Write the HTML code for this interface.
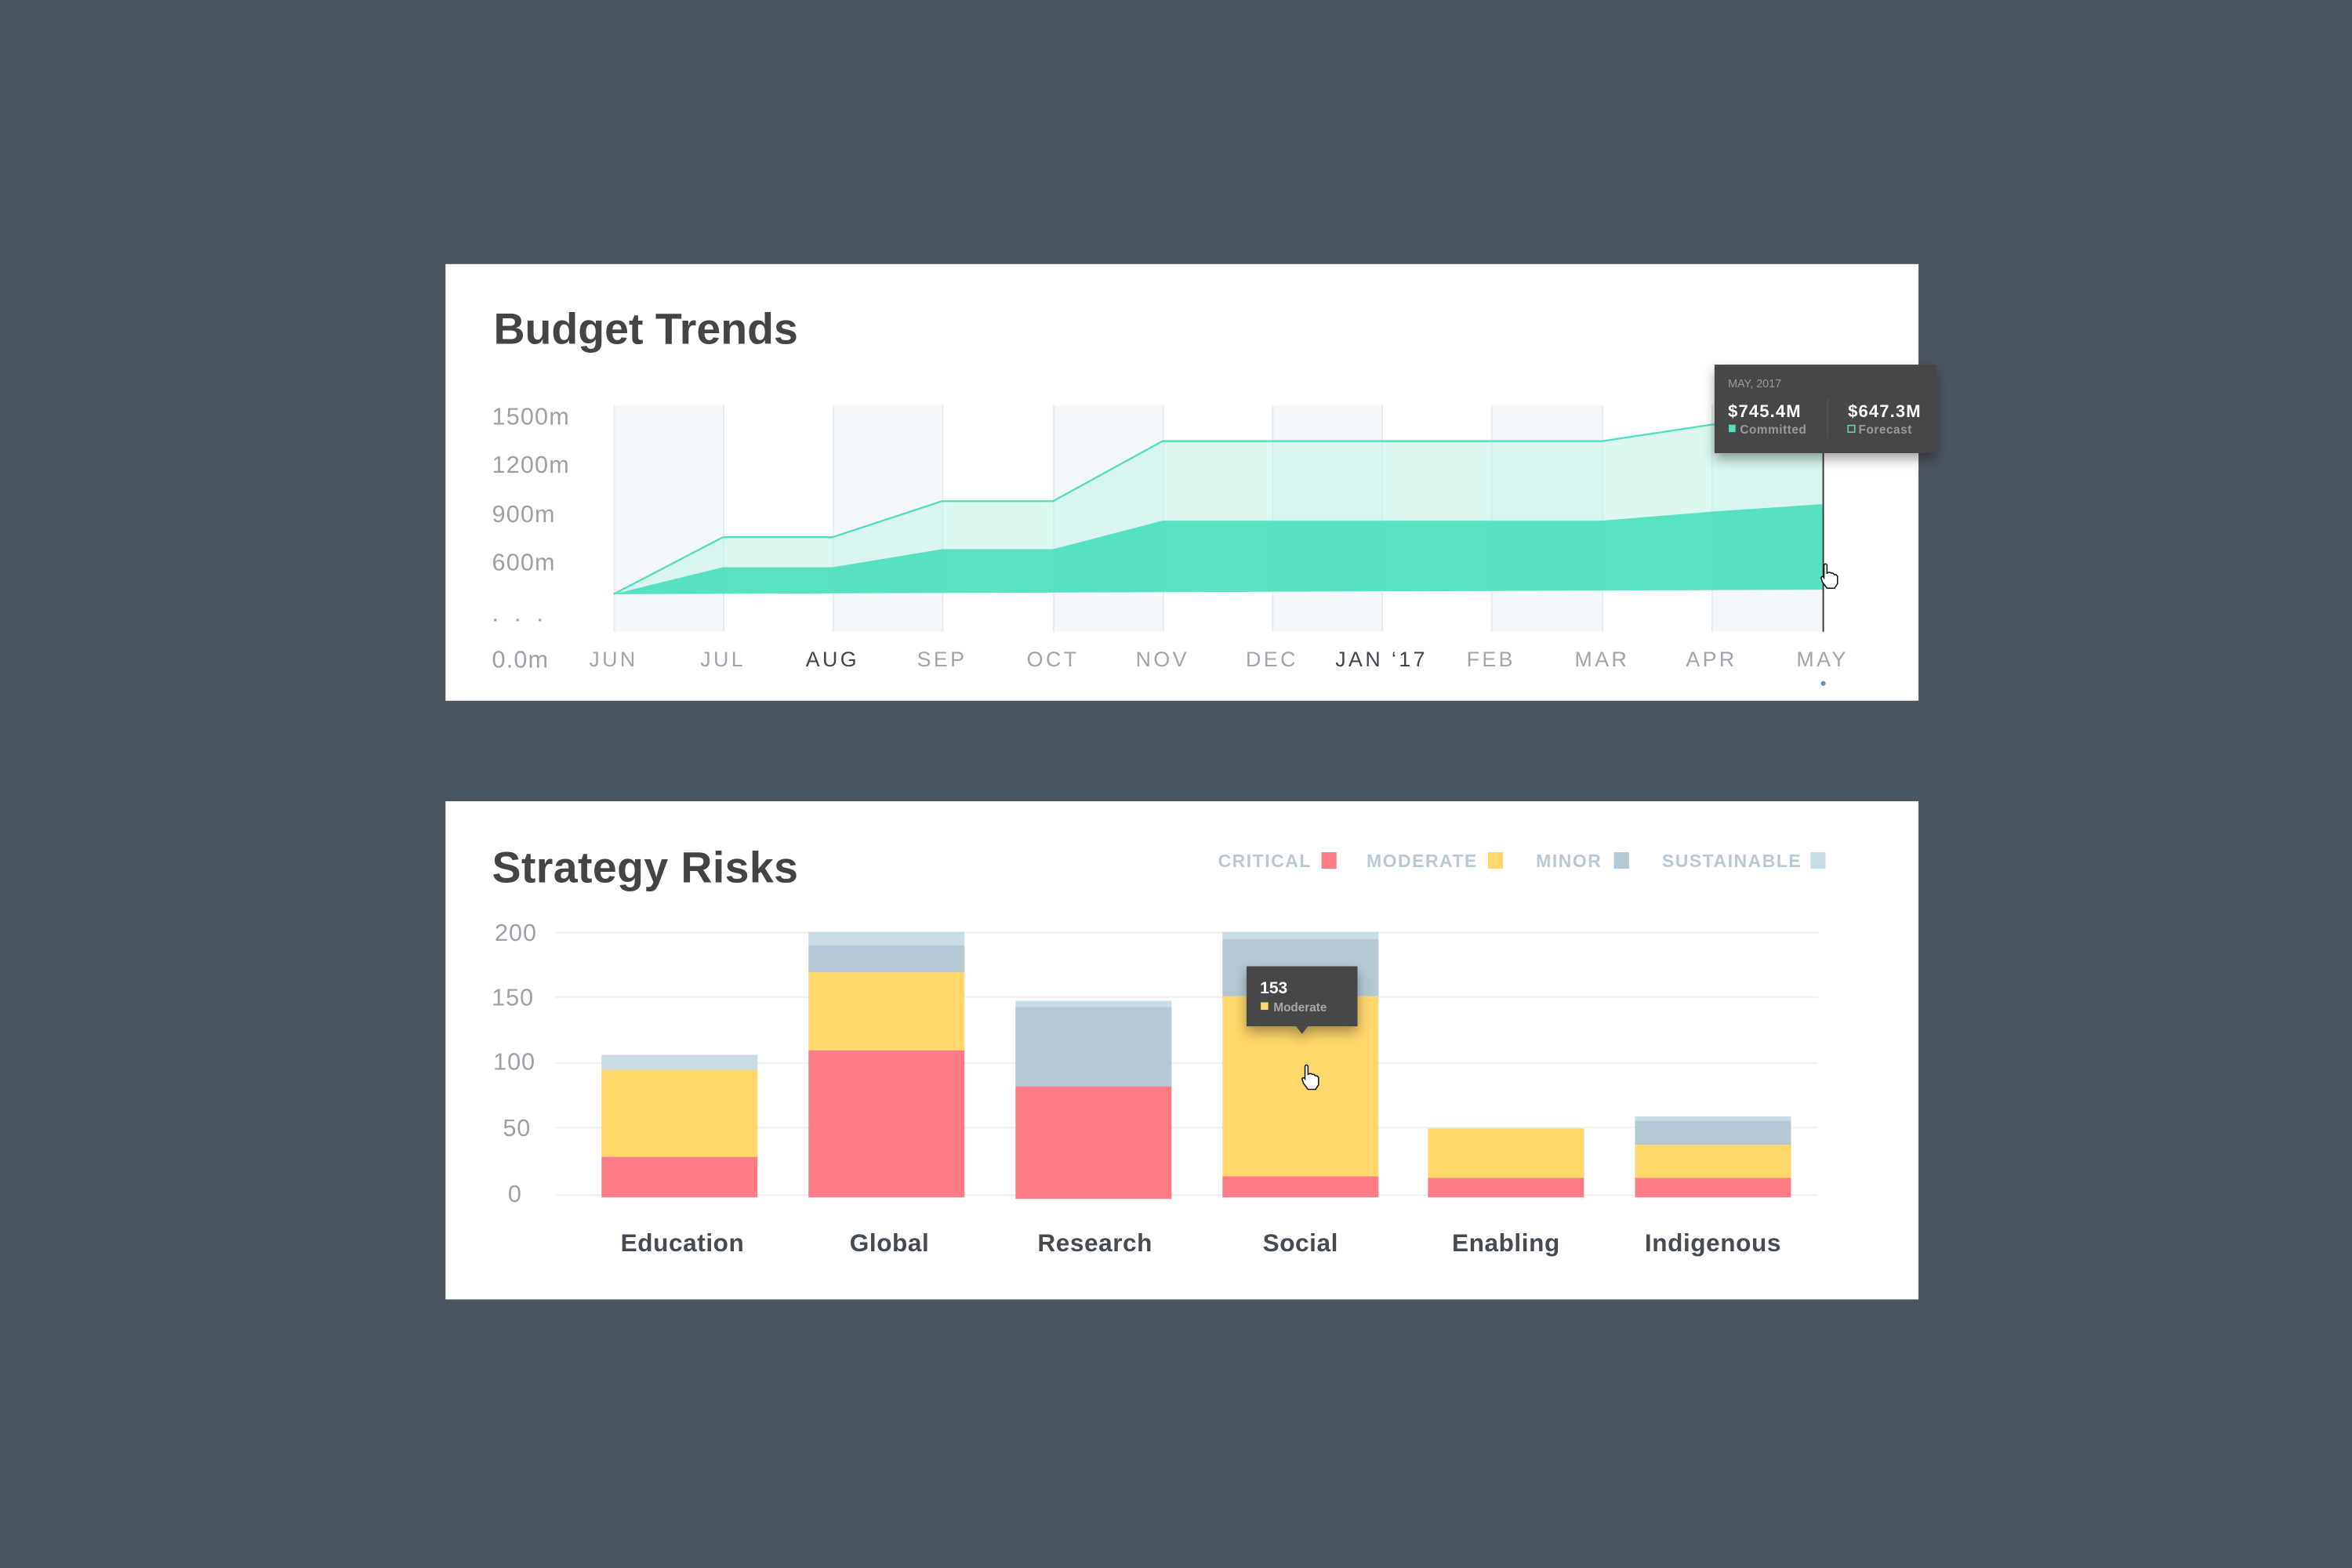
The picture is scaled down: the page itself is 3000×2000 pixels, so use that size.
<!DOCTYPE html>
<html><head><meta charset="utf-8"><style>
html,body{margin:0;padding:0;background:#4b555f;width:3000px;height:2000px;overflow:hidden}
svg{display:block}
text{font-family:"Liberation Sans",sans-serif}
</style></head><body>
<svg width="3000" height="2000" viewBox="0 0 1568 1045" preserveAspectRatio="none" xmlns="http://www.w3.org/2000/svg">
<defs>
<filter id="sh" x="-30%" y="-30%" width="160%" height="180%"><feDropShadow dx="0" dy="4" stdDeviation="4" flood-color="#000" flood-opacity="0.35"/></filter>
</defs>
<rect width="1568" height="1045" fill="#4b555f"/>
<!-- Card 1 -->
<rect x="297" y="176" width="982" height="291" fill="#fff"/>
<text x="329" y="229" font-size="29" font-weight="bold" fill="#444" letter-spacing="0">Budget Trends</text>
<g font-size="16" fill="#9ca1a8" letter-spacing="0.6">
<text x="328" y="283">1500m</text><text x="328" y="315">1200m</text><text x="328" y="348">900m</text><text x="328" y="380">600m</text>
<text x="328" y="414" letter-spacing="3">. . .</text><text x="328" y="445">0.0m</text>
</g>
<g fill="#f5f8fb">
<rect x="409" y="270" width="73" height="151"/><rect x="555" y="270" width="73" height="151"/><rect x="702" y="270" width="73" height="151"/>
<rect x="848" y="270" width="73" height="151"/><rect x="994" y="270" width="74" height="151"/><rect x="1141" y="270" width="74" height="151"/>
</g>
<g stroke="#e6ebef" stroke-width="1">
<line x1="409.5" y1="270" x2="409.5" y2="421"/><line x1="482.5" y1="270" x2="482.5" y2="421"/><line x1="555.5" y1="270" x2="555.5" y2="421"/><line x1="628.5" y1="270" x2="628.5" y2="421"/><line x1="702.5" y1="270" x2="702.5" y2="421"/><line x1="775.5" y1="270" x2="775.5" y2="421"/><line x1="848.5" y1="270" x2="848.5" y2="421"/><line x1="921.5" y1="270" x2="921.5" y2="421"/><line x1="994.5" y1="270" x2="994.5" y2="421"/><line x1="1068.5" y1="270" x2="1068.5" y2="421"/><line x1="1141.5" y1="270" x2="1141.5" y2="421"/>
</g>
<polygon points="409,396 482,358 555,358 628,334 702,334 775,294 1068,294 1141,283 1215,276 1215,393 409,396" fill="#bff3e6" fill-opacity="0.55"/>
<polygon points="409,396 482,378 555,378 628,366 702,366 775,347 1068,347 1141,341 1215,336 1215,393" fill="#4fe0bf" fill-opacity="0.95"/>
<polyline points="409,396 482,358 555,358 628,334 702,334 775,294 1068,294 1141,283 1215,276" fill="none" stroke="#4fdfbf" stroke-width="1.2"/>
<line x1="1215.5" y1="300" x2="1215.5" y2="421" stroke="#333" stroke-width="1"/>
<g font-size="14" fill="#a0a5ab" text-anchor="middle" letter-spacing="1.8">
<text x="409" y="444">JUN</text><text x="482" y="444">JUL</text><text x="555" y="444" fill="#3f444a">AUG</text><text x="628" y="444">SEP</text><text x="702" y="444">OCT</text><text x="775" y="444">NOV</text><text x="848" y="444">DEC</text><text x="921" y="444" fill="#3f444a">JAN ‘17</text><text x="994" y="444">FEB</text><text x="1068" y="444">MAR</text><text x="1141" y="444">APR</text><text x="1215" y="444">MAY</text>
</g>
<circle cx="1215.5" cy="455.5" r="1.6" fill="#6a90b0"/>
<!-- cursor 1 -->
<g transform="translate(1213,375)" stroke="#111" stroke-width="0.8" fill="#fff">
<path d="M3,9 L3,1.5 Q4,0 5,1.5 L5,7 L6,6.5 L7,6.5 L8,7 L9,7 L10,8 L11,8 L12,9 L12,14 L10,17 L5,17 L2,13 L1,10 Q2,8.5 3,10 Z"/>
</g>
<!-- tooltip 1 -->
<g filter="url(#sh)"><rect x="1143" y="243" width="148" height="59" fill="#464646"/></g>
<text x="1152" y="258" font-size="7.5" fill="#9a9a9a">MAY, 2017</text>
<text x="1152" y="278" font-size="11.5" font-weight="bold" fill="#fff" letter-spacing="0.6">$745.4M</text>
<rect x="1152.5" y="283" width="4.5" height="5" fill="#4fe0bf"/>
<text x="1160" y="289" font-size="8" font-weight="bold" fill="#9a9a9a" letter-spacing="0.3">Committed</text>
<line x1="1218.5" y1="266" x2="1218.5" y2="292" stroke="#555" stroke-width="0.7"/>
<text x="1232" y="278" font-size="11.5" font-weight="bold" fill="#fff" letter-spacing="0.6">$647.3M</text>
<rect x="1232" y="283.5" width="4.5" height="4.5" fill="none" stroke="#4fe0bf" stroke-width="0.8"/>
<text x="1239" y="289" font-size="8" font-weight="bold" fill="#9a9a9a" letter-spacing="0.3">Forecast</text>

<!-- Card 2 -->
<rect x="297" y="534" width="982" height="332" fill="#fff"/>
<text x="328" y="588" font-size="29" font-weight="bold" fill="#444" letter-spacing="0.2">Strategy Risks</text>
<g font-size="12" fill="#b8c9d4" letter-spacing="0.8" font-weight="bold">
<text x="812" y="578">CRITICAL</text><text x="911" y="578">MODERATE</text><text x="1024" y="578">MINOR</text><text x="1108" y="578">SUSTAINABLE</text>
</g>
<rect x="881" y="568" width="10" height="11" fill="#ff7b85"/>
<rect x="992" y="568" width="10" height="11" fill="#ffd76a"/>
<rect x="1076" y="568" width="10" height="11" fill="#b4c7d3"/>
<rect x="1207" y="568" width="10" height="11" fill="#c9dce6"/>
<g stroke="#eef0f2" stroke-width="1.2">
<line x1="370" y1="621.5" x2="1212" y2="621.5"/><line x1="370" y1="664.5" x2="1212" y2="664.5"/><line x1="370" y1="708.5" x2="1212" y2="708.5"/><line x1="370" y1="751.5" x2="1212" y2="751.5"/><line x1="370" y1="796.5" x2="1212" y2="796.5"/>
</g>
<g font-size="16" fill="#9ca1a8" text-anchor="end" letter-spacing="0.5">
<text x="358" y="627">200</text><text x="356" y="670">150</text><text x="357" y="713">100</text><text x="354" y="757">50</text><text x="348" y="801">0</text>
</g>
<!-- bars -->
<rect x="401" y="703" width="104" height="10" fill="#c9dce6"/>
<rect x="401" y="713" width="104" height="58" fill="#ffd76a"/>
<rect x="401" y="771" width="104" height="27" fill="#ff7b85"/>

<rect x="539" y="621" width="104" height="9" fill="#c9dce6"/>
<rect x="539" y="630" width="104" height="18" fill="#b4c7d3"/>
<rect x="539" y="648" width="104" height="52" fill="#ffd76a"/>
<rect x="539" y="700" width="104" height="98" fill="#ff7b85"/>

<rect x="677" y="667" width="104" height="4" fill="#c9dce6"/>
<rect x="677" y="671" width="104" height="53" fill="#b4c7d3"/>
<rect x="677" y="724" width="104" height="75" fill="#ff7b85"/>

<rect x="815" y="621" width="104" height="5" fill="#c9dce6"/>
<rect x="815" y="626" width="104" height="38" fill="#b4c7d3"/>
<rect x="815" y="664" width="104" height="120" fill="#ffd76a"/>
<rect x="815" y="784" width="104" height="14" fill="#ff7b85"/>

<rect x="952" y="752" width="104" height="33" fill="#ffd76a"/>
<rect x="952" y="785" width="104" height="13" fill="#ff7b85"/>

<rect x="1090" y="744" width="104" height="3" fill="#c9dce6"/>
<rect x="1090" y="747" width="104" height="16" fill="#b4c7d3"/>
<rect x="1090" y="763" width="104" height="22" fill="#ffd76a"/>
<rect x="1090" y="785" width="104" height="13" fill="#ff7b85"/>

<g font-size="16.5" font-weight="bold" fill="#454b52" text-anchor="middle" letter-spacing="0.3">
<text x="455" y="834">Education</text><text x="593" y="834">Global</text><text x="730" y="834">Research</text><text x="867" y="834">Social</text><text x="1004" y="834">Enabling</text><text x="1142" y="834">Indigenous</text>
</g>
<!-- tooltip 2 -->
<g filter="url(#sh)"><rect x="831" y="644" width="74" height="40" fill="#464646"/><polygon points="864,684 872,684 868,689" fill="#464646"/></g>
<text x="840" y="662" font-size="11" font-weight="bold" fill="#fff">153</text>
<rect x="840.5" y="668" width="5" height="5" fill="#ffd76a"/>
<text x="849" y="674" font-size="8" font-weight="bold" fill="#a8a8a8">Moderate</text>
<!-- cursor 2 -->
<g transform="translate(867,709)" stroke="#111" stroke-width="0.8" fill="#fff">
<path d="M3,9 L3,1.5 Q4,0 5,1.5 L5,7 L6,6.5 L7,6.5 L8,7 L9,7 L10,8 L11,8 L12,9 L12,14 L10,17 L5,17 L2,13 L1,10 Q2,8.5 3,10 Z"/>
</g>
</svg>
</body></html>
